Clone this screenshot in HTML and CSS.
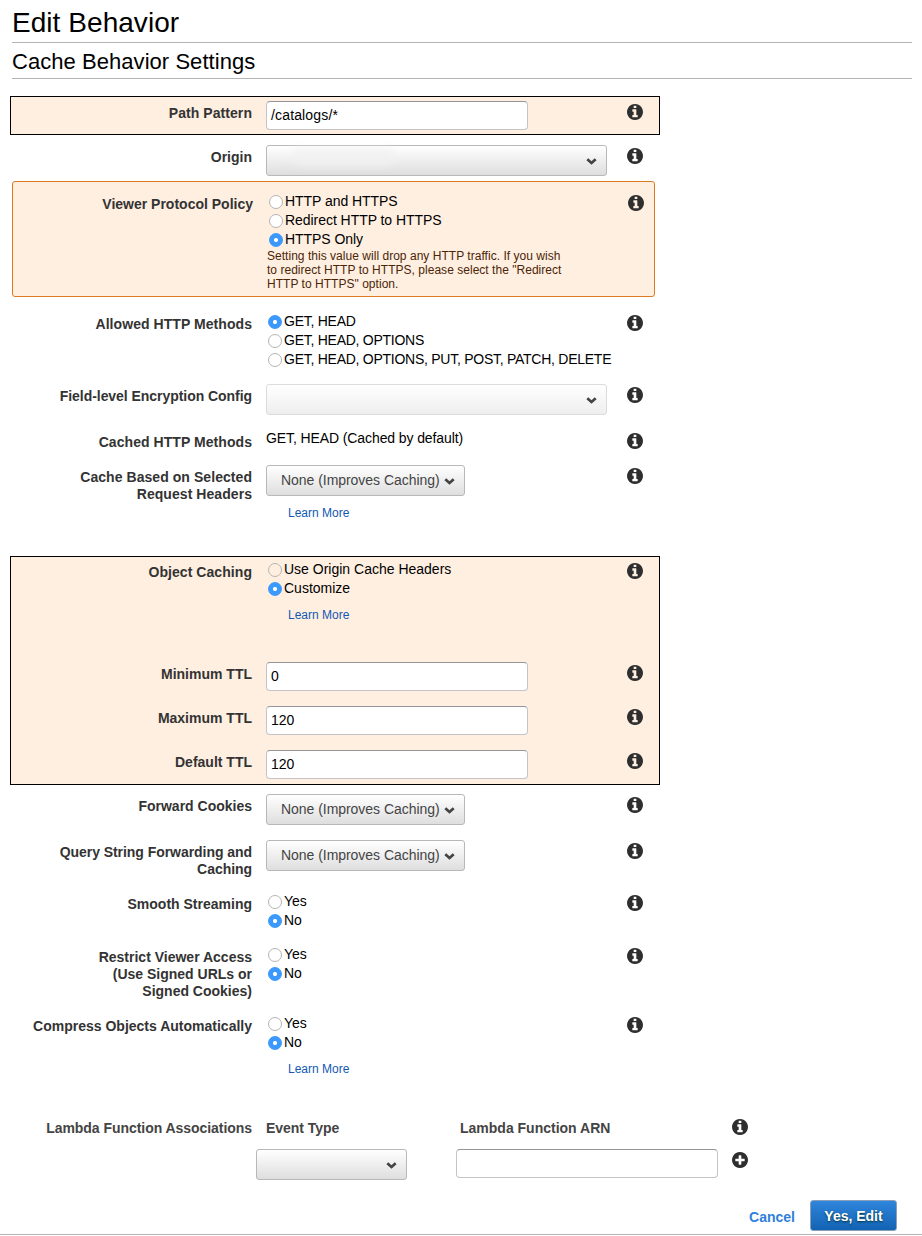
FILE: index.html
```html
<!DOCTYPE html>
<html lang="en">
<head>
<meta charset="utf-8">
<title>Edit Behavior</title>
<link rel="stylesheet" href="styles.css">
</head>
<body>
<svg class="sprite" width="0" height="0" aria-hidden="true">
  <symbol id="info" viewBox="128 128 1536 1536"><path d="M1152 1376v-160q0-14-9-23t-23-9h-96v-512q0-14-9-23t-23-9h-320q-14 0-23 9t-9 23v160q0 14 9 23t23 9h96v320h-96q-14 0-23 9t-9 23v160q0 14 9 23t23 9h448q14 0 23-9t9-23zm-128-896v-160q0-14-9-23t-23-9h-192q-14 0-23 9t-9 23v160q0 14 9 23t23 9h192q14 0 23-9t9-23zm640 416q0 209-103 385.5t-279.5 279.5-385.5 103-385.5-103-279.5-279.5-103-385.5 103-385.5 279.5-279.5 385.5-103 385.5 103 279.5 279.5 103 385.5z"/></symbol>
  <symbol id="plus" viewBox="128 128 1536 1536"><path d="M1344 960v-128q0-26-19-45t-45-19h-256v-256q0-26-19-45t-45-19h-128q-26 0-45 19t-19 45v256h-256q-26 0-45 19t-19 45v128q0 26 19 45t45 19h256v256q0 26 19 45t45 19h128q26 0 45-19t19-45v-256h256q26 0 45-19t19-45zm320-64q0 209-103 385.5t-279.5 279.5-385.5 103-385.5-103-279.5-279.5-103-385.5 103-385.5 279.5-279.5 385.5-103 385.5 103 279.5 279.5 103 385.5z"/></symbol>
  <symbol id="chevron" viewBox="0 0 11 7"><path d="M1.3 1.3L5.5 5L9.7 1.3" fill="none" stroke="#444" stroke-width="2.7"/></symbol>
</svg>

<header>
  <h1 class="title">Edit Behavior</h1>
  <h2 class="subtitle">Cache Behavior Settings</h2>
</header>

<main class="form">
  <section class="box box-path">
    <div class="row">
      <div class="label loose">Path Pattern</div>
      <div class="field"><div class="input loose">/catalogs/*</div></div>
      <svg class="icon"><use href="#info"/></svg>
    </div>
  </section>

  <div class="row row-origin">
    <div class="label">Origin</div>
    <div class="field"><div class="select wide"><span class="smudge"></span><svg class="chevron"><use href="#chevron"/></svg></div></div>
    <svg class="icon"><use href="#info"/></svg>
  </div>

  <section class="box box-viewer">
    <div class="row">
      <div class="label">Viewer Protocol Policy</div>
      <div class="field">
        <div class="option snug"><i class="radio"></i>HTTP and HTTPS</div>
        <div class="option snug"><i class="radio"></i>Redirect HTTP to HTTPS</div>
        <div class="option snug"><i class="radio on"></i>HTTPS Only</div>
        <p class="help">Setting this value will drop any HTTP traffic. If you wish<br>to redirect HTTP to HTTPS, please select the "Redirect<br>HTTP to HTTPS" option.</p>
      </div>
      <svg class="icon"><use href="#info"/></svg>
    </div>
  </section>

  <div class="row row-allowed">
    <div class="label loose">Allowed HTTP Methods</div>
    <div class="field">
      <div class="option tight"><i class="radio on"></i>GET, HEAD</div>
      <div class="option tight"><i class="radio"></i>GET, HEAD, OPTIONS</div>
      <div class="option tight"><i class="radio"></i>GET, HEAD, OPTIONS, PUT, POST, PATCH, DELETE</div>
    </div>
    <svg class="icon"><use href="#info"/></svg>
  </div>

  <div class="row row-encryption">
    <div class="label snug">Field-level Encryption Config</div>
    <div class="field"><div class="select wide disabled"><svg class="chevron"><use href="#chevron"/></svg></div></div>
    <svg class="icon"><use href="#info"/></svg>
  </div>

  <div class="row row-cached">
    <div class="label loose">Cached HTTP Methods</div>
    <div class="field static">GET, HEAD (Cached by default)</div>
    <svg class="icon"><use href="#info"/></svg>
  </div>

  <div class="row row-headers">
    <div class="label loose">Cache Based on Selected<br>Request Headers</div>
    <div class="field">
      <div class="select">None (Improves Caching)<svg class="chevron"><use href="#chevron"/></svg></div>
      <a class="learn">Learn More</a>
    </div>
    <svg class="icon"><use href="#info"/></svg>
  </div>

  <section class="box box-caching">
    <div class="row row-caching">
      <div class="label loose">Object Caching</div>
      <div class="field">
        <div class="option"><i class="radio clear"></i>Use Origin Cache Headers</div>
        <div class="option"><i class="radio on"></i>Customize</div>
        <a class="learn">Learn More</a>
      </div>
      <svg class="icon"><use href="#info"/></svg>
    </div>
    <div class="row row-ttl">
      <div class="label">Minimum TTL</div>
      <div class="field"><div class="input">0</div></div>
      <svg class="icon"><use href="#info"/></svg>
    </div>
    <div class="row row-ttl">
      <div class="label">Maximum TTL</div>
      <div class="field"><div class="input">120</div></div>
      <svg class="icon"><use href="#info"/></svg>
    </div>
    <div class="row">
      <div class="label">Default TTL</div>
      <div class="field"><div class="input">120</div></div>
      <svg class="icon"><use href="#info"/></svg>
    </div>
  </section>

  <div class="row row-cookies">
    <div class="label">Forward Cookies</div>
    <div class="field"><div class="select">None (Improves Caching)<svg class="chevron"><use href="#chevron"/></svg></div></div>
    <svg class="icon"><use href="#info"/></svg>
  </div>

  <div class="row row-query">
    <div class="label snug">Query String Forwarding and<br>Caching</div>
    <div class="field"><div class="select">None (Improves Caching)<svg class="chevron"><use href="#chevron"/></svg></div></div>
    <svg class="icon"><use href="#info"/></svg>
  </div>

  <div class="row row-streaming">
    <div class="label">Smooth Streaming</div>
    <div class="field">
      <div class="option"><i class="radio"></i>Yes</div>
      <div class="option"><i class="radio on"></i>No</div>
    </div>
    <svg class="icon"><use href="#info"/></svg>
  </div>

  <div class="row row-restrict">
    <div class="label">Restrict Viewer Access<br>(Use Signed URLs or<br>Signed Cookies)</div>
    <div class="field">
      <div class="option"><i class="radio"></i>Yes</div>
      <div class="option"><i class="radio on"></i>No</div>
    </div>
    <svg class="icon"><use href="#info"/></svg>
  </div>

  <div class="row row-compress">
    <div class="label">Compress Objects Automatically</div>
    <div class="field">
      <div class="option"><i class="radio"></i>Yes</div>
      <div class="option"><i class="radio on"></i>No</div>
      <a class="learn">Learn More</a>
    </div>
    <svg class="icon"><use href="#info"/></svg>
  </div>

  <section class="lambda">
    <div class="label snug">Lambda Function Associations</div>
    <div class="label snug col-head">Event Type</div>
    <div class="label col-head">Lambda Function ARN</div>
    <svg class="icon"><use href="#info"/></svg>
    <div class="select event"><svg class="chevron"><use href="#chevron"/></svg></div>
    <div class="input arn"></div>
    <svg class="icon"><use href="#plus"/></svg>
  </section>
</main>

<footer class="actions">
  <a class="cancel">Cancel</a>
  <button class="submit" type="button">Yes, Edit</button>
</footer>
</body>
</html>
```
FILE: styles.css
```css
* { box-sizing: border-box; }

body {
  margin: 0;
  height: 1236px;
  overflow: hidden;
  background: #fff;
  color: #000;
  font: 14px/17px "Liberation Sans", Arial, Helvetica, sans-serif;
}

.sprite { display: block; }

.loose { letter-spacing: 0.06px; }
.snug { letter-spacing: -0.05px; }
.tight { letter-spacing: -0.26px; }

.title, .subtitle {
  margin: 0 10px 0 12px;
  border-bottom: 1px solid #b4b4b4;
  font-weight: 400;
}
.title { height: 43px; padding-top: 7px; font-size: 28px; line-height: 32px; letter-spacing: 0.05px; }
.subtitle { height: 36px; padding-top: 6px; font-size: 22px; line-height: 25px; letter-spacing: 0.05px; }

.form { --label: 252px; padding-top: 17px; }

.row {
  display: grid;
  grid-template-columns: var(--label) 361px 16px;
  align-items: start;
}
.field { margin-left: 14px; }

.label {
  padding-top: 4px;
  color: #333;
  font-weight: 700;
  text-align: right;
}

.icon { width: 16px; height: 16px; margin-left: 14px; margin-top: 3px; fill: #2e2e2e; }

.row-origin { height: 36px; margin-top: 10px; }
.row-allowed { height: 72px; margin-top: 15px; }
.row-encryption { height: 46px; }
.row-cached { height: 35px; }
.row-headers { height: 91px; }
.row-caching { height: 102px; }
.row-ttl { height: 44px; }
.row-cookies { height: 46px; margin-top: 9px; }
.row-query { height: 52px; }
.row-streaming { height: 53px; }
.row-restrict { height: 69px; }
.row-compress { height: 102px; }

.box {
  --label: 241px;
  width: 650px;
  margin-left: 10px;
  border: 1px solid #000;
  background: #ffefe1;
}
.box-path { height: 39px; padding-top: 4px; }
.box-viewer {
  --label: 240px;
  width: 643px;
  height: 116px;
  margin-left: 12px;
  padding-top: 10px;
  border-color: #dd7a22;
  border-radius: 3px;
}
.box-caching { height: 229px; padding-top: 3px; }

.input {
  width: 262px;
  height: 29px;
  padding: 5px 4px 0;
  border: 1px solid #c4c4c8;
  border-top-color: #96969a;
  border-radius: 4px;
  background: #fff;
}
.input.loose { letter-spacing: 0.15px; }

.select {
  display: flex;
  justify-content: space-between;
  width: 199px;
  height: 31px;
  padding: 6px 9px 0 14px;
  border: 1px solid #b8b8b8;
  border-radius: 3px;
  background: linear-gradient(#fff, #dedede);
  color: #444;
  letter-spacing: -0.04px;
  white-space: nowrap;
}
.select.wide { width: 341px; }
.select.disabled { border-color: #dcdcdc; background: linear-gradient(#fff, #eee); }
.chevron { width: 11px; height: 7px; margin: 6px 0 0 auto; }
.smudge { width: 100px; height: 14px; margin: -2px 0 0 12px; background: #f1f1f1; filter: blur(5px); }

.option { display: flex; height: 19px; line-height: 19px; padding-left: 2px; white-space: nowrap; }
.radio {
  flex: none;
  width: 14px;
  height: 14px;
  margin: 3px 2px 0 0;
  border: 1px solid #b4b4b4;
  border-radius: 50%;
  background: #fff;
}
.radio.clear { background: transparent; }
.radio.on {
  border-color: #3b99fc;
  background: radial-gradient(circle, #fff 0 1.7px, #3b99fc 2.4px);
}

.help {
  margin: 0;
  color: #4a2508;
  font-size: 12px;
  line-height: 14px;
  letter-spacing: 0.03px;
  white-space: nowrap;
}
.static { line-height: 16px; letter-spacing: -0.1px; }
.learn {
  display: block;
  margin: 10px 0 0 22px;
  color: #1258b4;
  font-size: 12px;
  line-height: 14px;
}

.lambda {
  display: grid;
  grid-template-columns: 252px 204px 262px 30px;
  grid-template-rows: 33px 52px;
  align-items: start;
  color: #444;
}
.lambda .label { color: #444; }
.lambda .col-head { padding-left: 14px; text-align: left; }
.lambda .col-head + .col-head { padding-left: 4px; }
.lambda .event { grid-column: 2; width: 151px; margin-left: 4px; }

.actions {
  display: flex;
  justify-content: flex-end;
  height: 34px;
  padding-right: 25px;
  border-bottom: 1px solid #b4b4b4;
}
.cancel { margin: 8px 15px 0 0; color: #2f80da; font-weight: 700; }
.submit {
  width: 87px;
  height: 31px;
  margin-top: -1px;
  padding: 0;
  border: 1px solid #8aa0b8;
  border-radius: 3px;
  background: linear-gradient(#2f86dc, #1262b3);
  color: #fff;
  font: 700 14px/30px "Liberation Sans", Arial, sans-serif;
  text-shadow: 0 1px 2px #033;
}
```
